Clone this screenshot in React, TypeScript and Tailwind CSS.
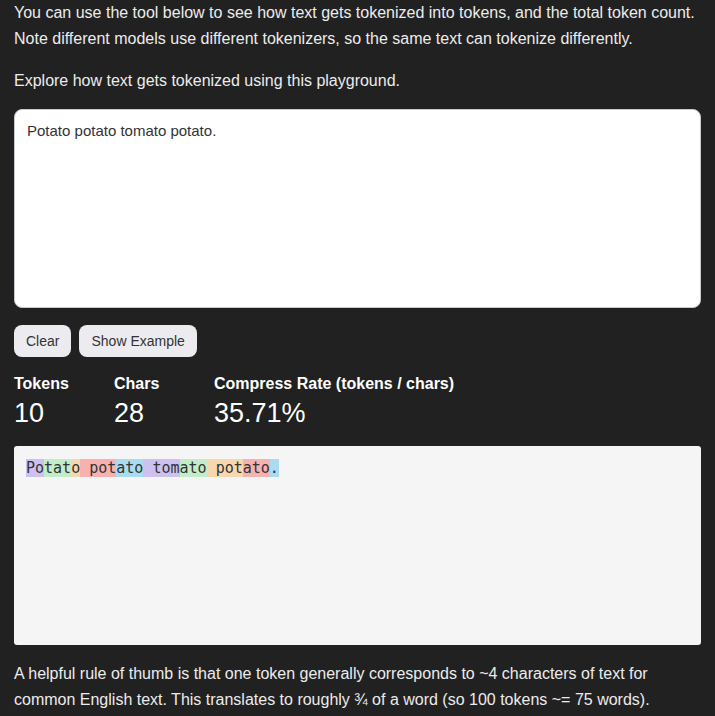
import React, { useState } from 'react';

// token colours cycle through the same five pastel swatches
const TOKEN_COLORS = ['bg-[#cdc2ef]', 'bg-[#c3ecc8]', 'bg-[#f7d8ae]', 'bg-[#f6b1b1]', 'bg-[#a9dbf1]'];

const EXAMPLE = 'Potato potato tomato potato.';
const TOKENS = ['Po', 'tat', 'o', ' pot', 'ato', ' tom', 'ato', ' pot', 'ato', '.'];

const App: React.FC = () => {
    const [text, setText] = useState(EXAMPLE);
    const tokens = text === EXAMPLE ? TOKENS : text ? [text] : [];
    const chars = text.length;
    const rate = chars ? ((tokens.length / chars) * 100).toFixed(2) + '%' : '0%';

    return (
        <div className="min-h-screen bg-[#212121] text-[#ececec] px-[14px] font-['Liberation_Sans',Arial,sans-serif] text-[16px] leading-[26px]">
            <p>
                You can use the tool below to see how text gets tokenized into tokens, and the total token count.
                Note different models use different tokenizers, so the same text can tokenize differently.
            </p>
            <p className="mt-4">Explore how text gets tokenized using this playground.</p>

            {/* 输入框 */}
            <textarea
                value={text}
                onChange={e => setText(e.target.value)}
                className="mt-[15px] block w-full h-[199px] resize-none rounded-lg border border-[#c9c9cf] bg-white px-3 py-[10px] text-[15px] leading-[22px] text-[#333] outline-none"
            />

            {/* 按钮 */}
            <div className="mt-[17px] flex gap-2">
                <button
                    onClick={() => setText('')}
                    className="h-8 px-3 rounded-lg bg-[#ececf0] text-[14px] text-[#333]"
                >
                    Clear
                </button>
                <button
                    onClick={() => setText(EXAMPLE)}
                    className="h-8 px-3 rounded-lg bg-[#ececf0] text-[14px] text-[#333]"
                >
                    Show Example
                </button>
            </div>

            {/* 统计 */}
            <div className="mt-[15px] flex">
                <Stat label="Tokens" value={String(tokens.length)} width="w-[100px]" />
                <Stat label="Chars" value={String(chars)} width="w-[100px]" />
                <Stat label="Compress Rate (tokens / chars)" value={rate} width="" />
            </div>

            {/* 分词结果 */}
            <div className="mt-4 h-[199px] rounded-[3px] bg-[#f5f5f5] px-3 pt-[13px]">
                <div className="font-['DejaVu_Sans_Mono',monospace] text-[15px] leading-[18px] text-[#333] whitespace-pre-wrap">
                    {tokens.map((t, i) => (
                        <span key={i} className={TOKEN_COLORS[i % TOKEN_COLORS.length]}>{t}</span>
                    ))}
                </div>
            </div>

            <p className="mt-4 pb-1">
                A helpful rule of thumb is that one token generally corresponds to ~4 characters of text for
                common English text. This translates to roughly ¾ of a word (so 100 tokens ~= 75 words).
            </p>
        </div>
    );
};

const Stat: React.FC<{ label: string; value: string; width: string }> = ({ label, value, width }) => (
    <div className={`flex flex-col ${width}`}>
        <div className="font-bold text-white leading-[24px]">{label}</div>
        <div className="text-[27px] leading-[34px] text-white">{value}</div>
    </div>
);

export default App;
